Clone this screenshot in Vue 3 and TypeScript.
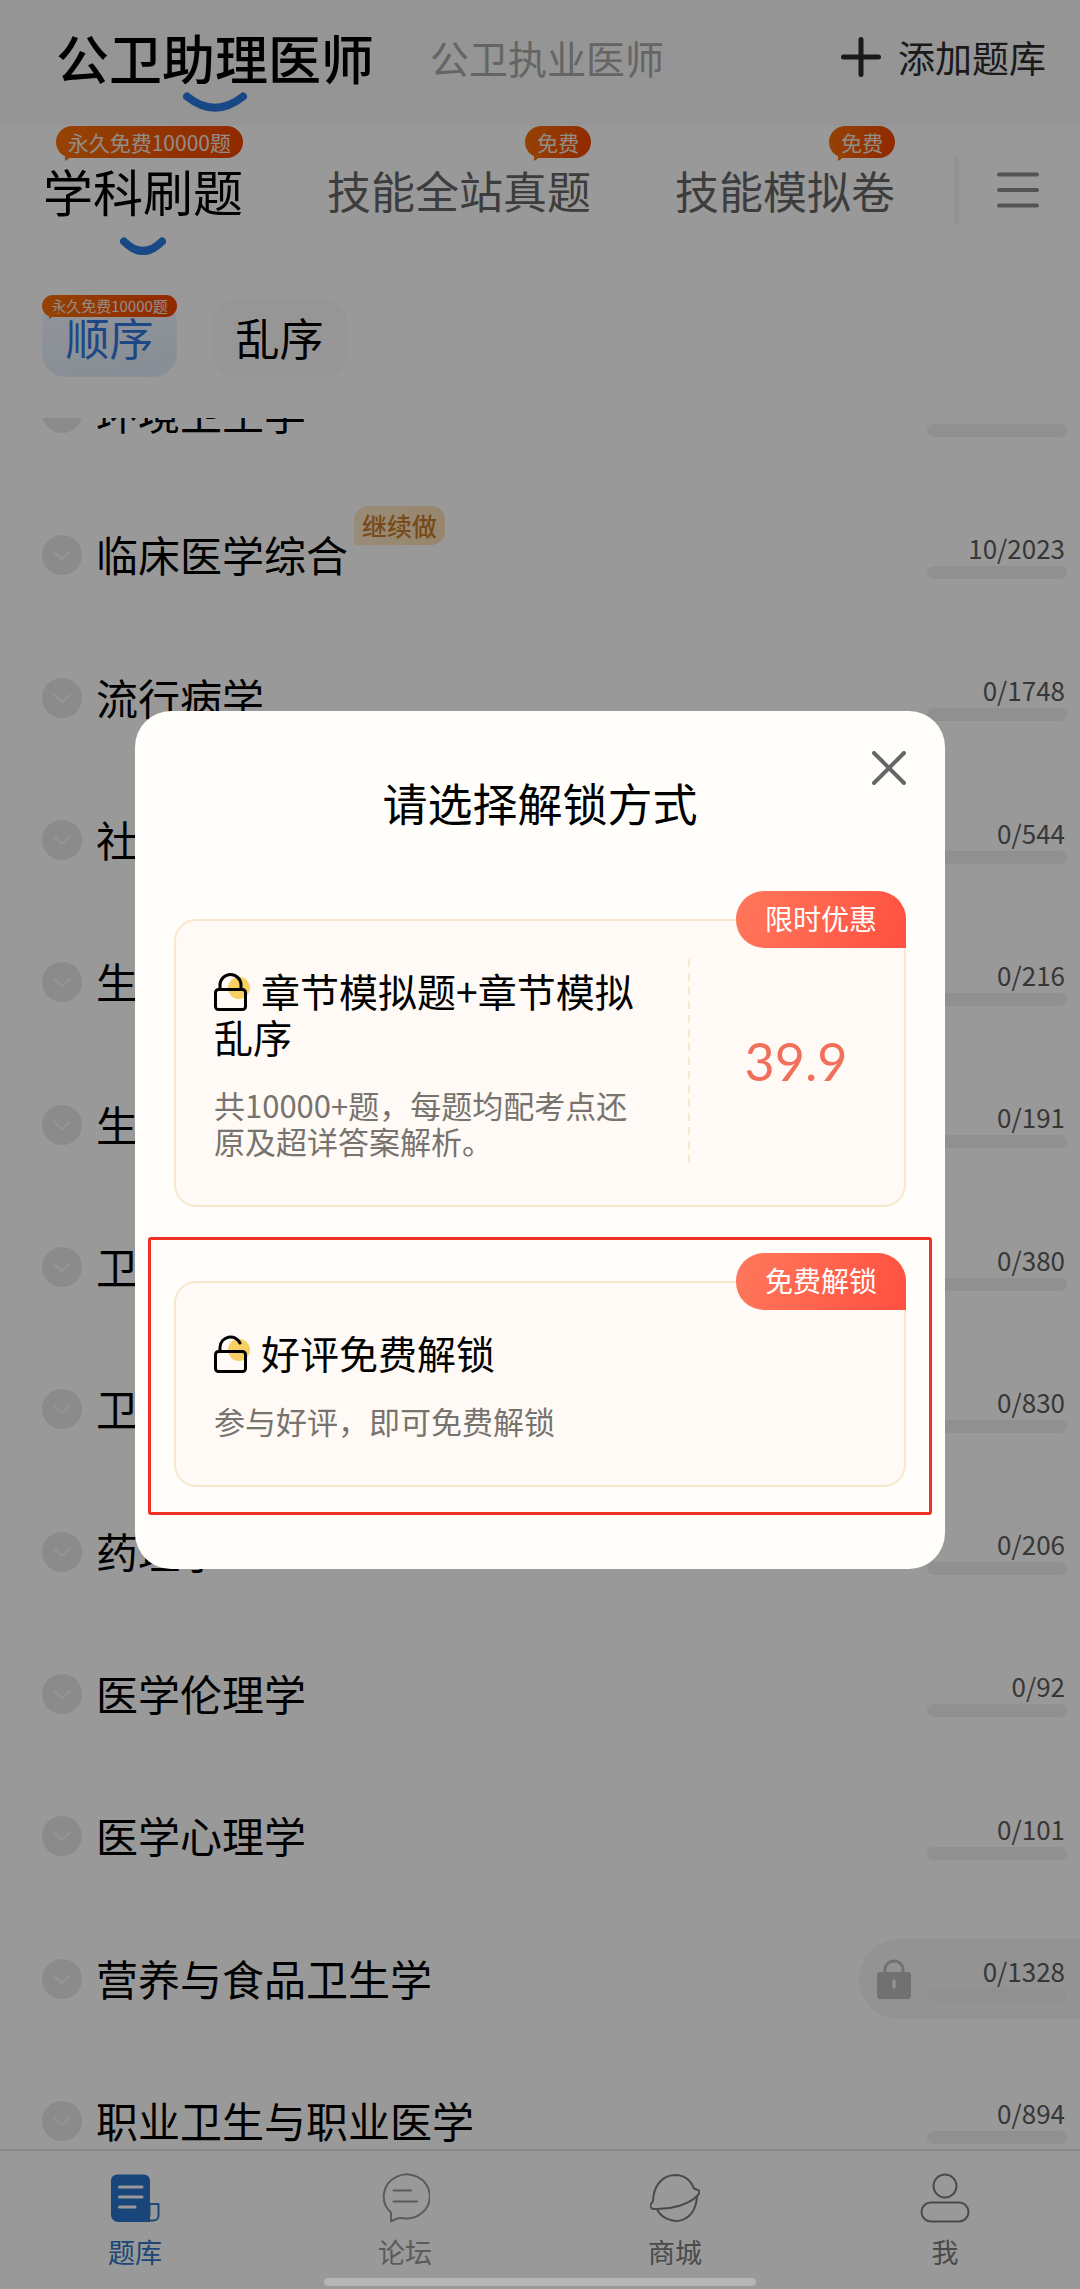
<script setup lang="ts">
import { ref } from 'vue'

interface Subject {
  name: string
  progress: string
  resume?: boolean
  locked?: boolean
}

interface Tab {
  label: string
  badge: string
}

const tabs: Tab[] = [
  { label: '学科刷题', badge: '永久免费10000题' },
  { label: '技能全站真题', badge: '免费' },
  { label: '技能模拟卷', badge: '免费' },
]
const activeTab = ref(0)

const subjects: Subject[] = [
  { name: '环境卫生学', progress: '' },
  { name: '临床医学综合', progress: '10/2023', resume: true },
  { name: '流行病学', progress: '0/1748' },
  { name: '社会医学', progress: '0/544' },
  { name: '生理学', progress: '0/216' },
  { name: '生物化学', progress: '0/191' },
  { name: '卫生法规', progress: '0/380' },
  { name: '卫生统计学', progress: '0/830' },
  { name: '药理学', progress: '0/206' },
  { name: '医学伦理学', progress: '0/92' },
  { name: '医学心理学', progress: '0/101' },
  { name: '营养与食品卫生学', progress: '0/1328', locked: true },
  { name: '职业卫生与职业医学', progress: '0/894' },
]

const dialogOpen = ref(true)
</script>

<template>
  <div class="app">
    <header class="header">
      <button class="bank bank-active" type="button">
        公卫助理医师
        <svg class="smile" width="64" height="20" viewBox="0 0 64 20" aria-hidden="true">
          <path d="M4 4.500Q32 27 60 4.500" />
        </svg>
      </button>
      <button class="bank" type="button">公卫执业医师</button>
      <button class="add" type="button">
        <svg width="40" height="40" viewBox="0 0 40 40" aria-hidden="true">
          <path d="M20 2.500V37.500M2.500 20H37.500" />
        </svg>
        添加题库
      </button>
    </header>

    <nav class="tabs">
      <div class="tab-group">
        <button
          v-for="(tab, i) in tabs"
          :key="tab.label"
          class="tab"
          :class="{ 'tab-active': i === activeTab }"
          type="button"
          @click="activeTab = i"
        >
          {{ tab.label }}
          <span class="bubble">{{ tab.badge }}</span>
          <svg v-if="i === activeTab" class="smile" width="46" height="18" viewBox="0 0 46 18" aria-hidden="true">
            <path d="M4 4.500Q23 23.500 42 4.500" />
          </svg>
        </button>
      </div>
      <button class="menu" type="button" aria-label="菜单">
        <svg width="42" height="36" viewBox="0 0 42 36" aria-hidden="true">
          <path d="M2 2.500H40M2 18H40M2 33.500H40" />
        </svg>
      </button>
    </nav>

    <div class="orders">
      <button class="order order-active" type="button">
        顺序
        <span class="bubble bubble-small">永久免费10000题</span>
      </button>
      <button class="order" type="button">乱序</button>
    </div>

    <main class="list">
      <ul class="rows">
        <li v-for="s in subjects" :key="s.name" class="row">
          <svg class="toggle" width="40" height="40" viewBox="0 0 40 40" aria-hidden="true">
            <circle cx="20" cy="20" r="20" />
            <path d="M12 16.500L20 24L28 16.500" />
          </svg>
          <span class="name">
            {{ s.name }}
            <span v-if="s.resume" class="resume">继续做</span>
          </span>
          <span class="stat" :class="{ 'stat-locked': s.locked }">
            <svg v-if="s.locked" class="padlock" width="34" height="40" viewBox="0 0 34 40" aria-hidden="true">
              <path class="padlock-shackle" d="M8 15V10.500a9 8.500 0 0 1 18 0V15" />
              <rect x="0" y="13" width="34" height="27" rx="3" />
              <ellipse cx="17" cy="25" rx="2" ry="5" />
            </svg>
            <span class="progress">
              <span class="count">{{ s.progress }}</span>
              <span class="track"></span>
            </span>
          </span>
        </li>
      </ul>
    </main>

    <footer class="nav">
      <a class="nav-item nav-active" href="#bank">
        <svg width="50" height="50" viewBox="0 0 50 50" aria-hidden="true">
          <path class="solid" d="M7 1.500H34a6 6 0 0 1 6 6V49H8a7 7 0 0 1-7-7V7.500a6 6 0 0 1 6-6Z" />
          <path class="curl" d="M39.500 31H48.500V42.500a5 5 0 0 1-5 5H36Q39.500 46 39.500 41Z" />
          <path class="lines" d="M9.500 14H32M9.500 24H32M9.500 34H25" />
        </svg>
        题库
      </a>
      <a class="nav-item nav-pale" href="#forum">
        <svg width="50" height="50" viewBox="0 0 50 50" aria-hidden="true">
          <path d="M11 39.500A23 22 0 1 1 22 45Q17 44.500 11 48.500Z" />
          <path d="M13.500 17.500H31M13.500 28.500H37" />
        </svg>
        论坛
      </a>
      <a class="nav-item" href="#mall">
        <svg width="50" height="50" viewBox="0 0 50 50" aria-hidden="true">
          <path d="M3 28C3.500 14 11 2.500 25 2C34 2 40.500 7 44 15.500L49 17.500Q51 20 46 24C38 31 22 37 3 36Q-1 34 1 31Z" />
          <path d="M7 36.500C16 53 45 54 47 23.500" />
        </svg>
        商城
      </a>
      <a class="nav-item" href="#me">
        <svg width="50" height="50" viewBox="0 0 50 50" aria-hidden="true">
          <circle cx="25" cy="13" r="11.500" />
          <rect x="1.500" y="29.500" width="47" height="19" rx="9.500" />
        </svg>
        我
      </a>
    </footer>

    <div v-if="dialogOpen" class="mask">
      <section class="dialog" role="dialog" aria-modal="true" aria-labelledby="dialog-title">
        <button class="close" type="button" aria-label="关闭" @click="dialogOpen = false">
          <svg width="34" height="34" viewBox="0 0 34 34" aria-hidden="true">
            <path d="M2 2L32 32M32 2L2 32" />
          </svg>
        </button>
        <h2 id="dialog-title" class="dialog-title">请选择解锁方式</h2>

        <button class="card card-paid" type="button">
          <span class="tag">限时优惠</span>
          <span class="card-text">
            <span class="card-title">
              <svg class="lock" width="36" height="38" viewBox="0 0 36 38" aria-hidden="true">
                <circle cx="25" cy="15" r="11" />
                <path d="M6 16V12a10.500 10.500 0 0 1 21 0V16" />
                <rect x="1.500" y="16.500" width="30" height="20" rx="3" />
              </svg>章节模拟题+章节模拟乱序
            </span>
            <span class="card-desc">共10000+题，每题均配考点还原及超详答案解析。</span>
          </span>
          <span class="price">39.9</span>
        </button>

        <div class="highlight">
          <button class="card" type="button">
            <span class="tag">免费解锁</span>
            <span class="card-text">
              <span class="card-title">
                <svg class="lock" width="36" height="38" viewBox="0 0 36 38" aria-hidden="true">
                  <circle cx="25" cy="15" r="11" />
                  <path d="M6 16V12a10.500 10.500 0 0 1 20 -4" />
                  <rect x="1.500" y="16.500" width="30" height="20" rx="3" />
                </svg>好评免费解锁
              </span>
              <span class="card-desc">参与好评，即可免费解锁</span>
            </span>
          </button>
        </div>
      </section>
    </div>
    <div class="home-bar"></div>
  </div>
</template>

<style>
body {
  margin: 0;
}
</style>

<style scoped>
.app {
  height: 100vh;
  display: flex;
  flex-direction: column;
  background: #fff;
  color: #000;
  overflow: hidden;
  font-family: "Noto Sans CJK SC", "Noto Sans", sans-serif;
}

button {
  padding: 0;
  border: 0;
  background: none;
  color: inherit;
  font: inherit;
  white-space: nowrap;
}

svg {
  display: block;
  flex: none;
  fill: none;
  stroke-linecap: round;
  stroke-linejoin: round;
}

.header {
  display: flex;
  align-items: center;
  gap: 56px;
  height: 125px;
  padding: 0 34px 12px 56px;
  box-sizing: border-box;
  background: #f8f8f8;
}

.bank {
  position: relative;
  font-size: 39px;
  line-height: 60px;
  color: #a8a8a8;
}

.bank-active {
  font-size: 53px;
  font-weight: 500;
  color: #000;
}

.smile {
  position: absolute;
  left: 50%;
  transform: translateX(-50%);
  stroke: #2b78e2;
  stroke-width: 8;
}

.bank .smile {
  top: 65px;
}

.tab .smile {
  top: 77px;
}

.add {
  display: flex;
  align-items: center;
  gap: 17px;
  margin-left: auto;
  font-size: 37px;
  line-height: 60px;
  color: #2c2c2c;
}

.add svg {
  stroke: #2c2c2c;
  stroke-width: 5;
}

.tabs {
  display: flex;
  align-items: center;
  justify-content: space-between;
  height: 134px;
  padding: 0 41px 5px 43px;
  box-sizing: border-box;
}

.tab-group {
  display: flex;
  gap: 84px;
}

.tab {
  position: relative;
  font-size: 44px;
  line-height: 60px;
  color: #666;
}

.tab-active {
  font-size: 50px;
  color: #000;
}

.bubble {
  position: absolute;
  right: 0;
  top: -34px;
  padding: 0 12px;
  border-radius: 16px;
  background: linear-gradient(100deg, #f87008, #f24400);
  color: #f4e8e0;
  font-size: 21px;
  line-height: 32px;
}

.bubble::after {
  content: "";
  position: absolute;
  left: 9px;
  bottom: -3px;
  border-top: 8px solid #f86e08;
  border-right: 12px solid transparent;
}

.bubble-small {
  top: -4px;
  left: 0;
  padding: 0;
  border-radius: 11px;
  font-size: 15px;
  line-height: 22px;
  text-align: center;
}

.bubble-small::after {
  left: 7px;
  bottom: -2px;
}

.menu {
  display: flex;
  align-items: center;
  height: 70px;
  padding-left: 38px;
  border-left: 5px solid #f6f6f6;
}

.menu svg {
  stroke: #8c8c8c;
  stroke-width: 4;
}

.orders {
  display: flex;
  align-items: center;
  gap: 35px;
  height: 159px;
  padding: 0 42px 2px;
  box-sizing: border-box;
}

.order {
  position: relative;
  width: 135px;
  padding-bottom: 2px;
  border-radius: 24px;
  background: #fbfafb;
  font-size: 44px;
  line-height: 76px;
}

.order-active {
  background: linear-gradient(170deg, #f4f8ff, #e2ecfb);
  color: #3379de;
}

.list {
  flex: 1;
  min-height: 0;
  overflow: hidden;
}

.rows {
  display: flex;
  flex-direction: column;
  height: calc(100% + 119px);
  margin: -76px 0 0;
  padding: 0;
  list-style: none;
}

.row {
  flex: 1;
  display: flex;
  align-items: center;
  padding-left: 42px;
}

.toggle circle {
  fill: #e8e8e8;
}

.toggle path {
  stroke: #f8f8f8;
  stroke-width: 2;
}

.name {
  position: relative;
  margin-left: 14px;
  padding-bottom: 2px;
  font-size: 42px;
  line-height: 60px;
}

.resume {
  position: absolute;
  left: 100%;
  top: -18px;
  margin-left: 6px;
  padding: 0 8px;
  border-radius: 14px 14px 14px 2px;
  background: linear-gradient(100deg, #ffe9c8, #fbdfb4);
  color: #c87c2a;
  font-size: 25px;
  line-height: 39px;
  font-weight: 500;
  white-space: nowrap;
}

.stat {
  display: flex;
  align-items: center;
  gap: 16px;
  height: 80px;
  margin-left: auto;
  padding: 0 13px 0 18px;
}

.stat-locked {
  border-radius: 40px 0 0 40px;
  background: #f5f5f5;
}

.padlock rect {
  fill: #bdbdbd;
}

.padlock ellipse {
  fill: #eee;
}

.padlock-shackle {
  stroke: #bdbdbd;
  stroke-width: 3;
}

.progress {
  display: flex;
  flex-direction: column;
  gap: 2px;
  width: 140px;
}

.count {
  min-height: 32px;
  padding-right: 2px;
  font-size: 26px;
  line-height: 32px;
  text-align: right;
  color: #5c5c5c;
}

.track {
  height: 13px;
  border-radius: 7px;
  background: #f1f1f1;
}

.nav {
  display: flex;
  height: 140px;
  border-top: 2px solid #e6e6e6;
  box-sizing: border-box;
}

.nav-item {
  flex: 1;
  display: flex;
  flex-direction: column;
  align-items: center;
  gap: 11px;
  padding-top: 22px;
  color: #7c7c7c;
  font-size: 27px;
  line-height: 36px;
  text-decoration: none;
}

.nav-item svg {
  stroke: currentColor;
  stroke-width: 2;
}

.nav-pale {
  color: #989898;
}

.nav-active {
  color: #2f74c8;
}

.nav-active .solid {
  fill: #2b75cb;
  stroke: none;
}

.nav-active .lines {
  stroke: #fff;
  stroke-width: 3;
}

.mask {
  position: fixed;
  inset: 0;
  display: flex;
  align-items: center;
  justify-content: center;
  padding-bottom: 10px;
  background: rgba(0, 0, 0, 0.4);
}

.dialog {
  position: relative;
  display: flex;
  flex-direction: column;
  width: 75%;
  padding: 62px 13px 54px;
  box-sizing: border-box;
  border-radius: 36px;
  background: #fffefa;
}

.close {
  position: absolute;
  right: 39px;
  top: 40px;
}

.close svg {
  stroke: #666;
  stroke-width: 4;
}

.dialog-title {
  margin: 0 0 86px;
  font-size: 45px;
  line-height: 60px;
  font-weight: 400;
  text-align: center;
}

.card {
  position: relative;
  display: flex;
  width: 100%;
  padding: 46px 38px;
  box-sizing: border-box;
  border: 2px solid #f8e8cb;
  border-radius: 22px;
  background: #fffaf5;
  text-align: left;
  white-space: normal;
}

.card-paid {
  width: auto;
  margin: 0 26px 30px;
  padding-right: 0;
}

.card-text {
  flex: 1;
  display: flex;
  flex-direction: column;
  gap: 28px;
}

.card-paid .card-text {
  padding-right: 44px;
}

.card-title {
  font-size: 39px;
  line-height: 46px;
}

.lock {
  display: inline-block;
  margin-right: 11px;
  vertical-align: -4px;
  stroke: #000;
  stroke-width: 3;
}

.lock circle {
  fill: #f8cf62;
  stroke: none;
}

.card-desc {
  font-size: 31px;
  line-height: 36px;
  color: #77736e;
}

.price {
  display: flex;
  align-items: center;
  justify-content: center;
  width: 216px;
  margin: -8px 0 -4px;
  background: repeating-linear-gradient(#f6ebc8 0 8px, transparent 8px 14px) left / 2px 100% no-repeat;
  color: #f0705c;
  font-family: Lato, sans-serif;
  font-size: 52px;
  line-height: 60px;
}

.tag {
  position: absolute;
  right: -2px;
  top: -30px;
  padding: 0 29px 2px;
  border-radius: 28px 28px 0 28px;
  background: linear-gradient(110deg, #ff785c, #ff5040);
  color: #fff;
  font-size: 28px;
  line-height: 55px;
}

.highlight {
  padding: 41px 23px 25px;
  border: 3px solid #ee3227;
  border-radius: 3px;
}

.home-bar {
  position: fixed;
  left: 30%;
  right: 30%;
  bottom: 3px;
  height: 8px;
  border-radius: 4px;
  background: #b5b5b5;
}
</style>
